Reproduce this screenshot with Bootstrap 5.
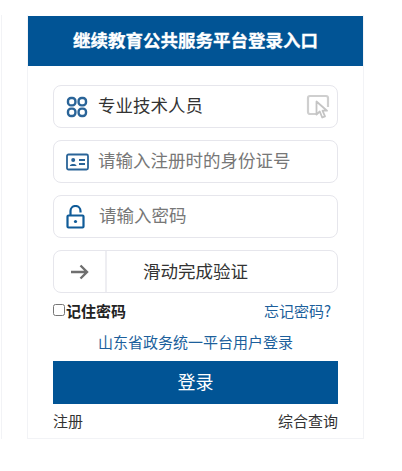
<!DOCTYPE html>
<html lang="zh-CN">
<head>
<meta charset="utf-8">
<title>登录</title>
<link href="https://cdn.jsdelivr.net/npm/bootstrap@5.3.0/dist/css/bootstrap.min.css" rel="stylesheet">
<style>
html,body{height:471px;overflow:hidden;background:#fff}
body{font-family:"Noto Sans CJK SC","Liberation Sans",sans-serif;color:#333;padding:15px 38px 0 1px}
.page-frame{border-left:1px solid #f2f3f6;height:424px;padding-left:25px}
.login-box{width:337px;height:424px;border:1px solid #f2f3f6;border-top:0;background:#fff;padding-top:1px}
.login-head{height:50px;width:335px;background:#015495;color:#fff;font-size:17.5px;font-weight:700;padding-bottom:2px;-webkit-text-stroke:.3px #fff}
.login-body{padding:19px 25px 0 25px;width:335px}
.field-row{height:43px;width:285px;border:1px solid #e6e6ec;border-radius:8px;margin-bottom:12px;padding-left:12px;font-size:17.5px;color:#333}
.field-row svg{flex:none}
.field-txt{margin-left:10px;line-height:1;padding-bottom:3px}
.id-txt{margin-left:9px}
.lock-txt{margin-left:14px}
.hint-txt{color:#777}
.pick-icon{margin-left:auto;margin-right:6px}
.slide-handle{width:53px;height:41px;border-right:2px solid #eeeef2;margin-left:-12px}
.slide-txt{margin-left:36px;color:#333;padding-bottom:1px}
.opt-row{height:38px;width:285px;margin-top:-1px;font-size:15px}
.opt-check{width:12px;height:12px;border:1.5px solid #767676;border-radius:2.5px;background:#fff;margin-right:1px;margin-bottom:3px}
.opt-label{font-weight:700;color:#222}
.blue-link{color:#1c5f9c;text-decoration:none}
.forgot-link{margin-right:7px}
.gov-link{width:285px;font-size:15px;height:22px;line-height:24px;margin-bottom:9px}
.login-btn{display:block;width:285px;height:43px;background:#015495;border:0;border-radius:0;color:#fff;font-size:18px;padding:0 0 3px}
.login-btn:hover{background:#015495;color:#fff}
.foot-row{width:285px;font-size:15px;margin-top:7px;line-height:20px}
.foot-row a{color:#333;text-decoration:none}
</style>
</head>
<body>
<div class="page-frame">
  <div class="login-box">
    <div class="login-head d-flex align-items-center justify-content-center">继续教育公共服务平台登录入口</div>
    <div class="login-body">
      <div class="field-row d-flex align-items-center">
        <svg width="22" height="22" viewBox="0 0 22 22" fill="none" stroke="#2a6498" stroke-width="2.4"><rect x="2" y="2" width="7.4" height="7.4" rx="3"/><rect x="12.6" y="2" width="7.4" height="7.4" rx="3"/><rect x="2" y="12.6" width="7.4" height="7.4" rx="3"/><rect x="12.6" y="12.6" width="7.4" height="7.4" rx="3"/></svg>
        <span class="field-txt">专业技术人员</span>
        <svg class="pick-icon" width="25" height="26" viewBox="0 0 25 26" fill="none"><path d="M10 20H4a2 2 0 0 1-2-2V4a2 2 0 0 1 2-2h16a2 2 0 0 1 2 2v9" stroke="#cfcfcf" stroke-width="2.2"/><path d="M10.500 7.500v13l3.300-3 2.400 6 2.800-1.200-2.500-5.600h4.500z" fill="#fff" stroke="#c4c4c4" stroke-width="1.800" stroke-linejoin="round"/></svg>
      </div>
      <div class="field-row d-flex align-items-center">
        <svg width="23" height="18" viewBox="0 0 23 18" fill="none"><rect x="1" y="1.500" width="21" height="15" rx="1.500" stroke="#2a6498" stroke-width="1.800"/><circle cx="7.200" cy="7" r="2" fill="#2a6498"/><path d="M3.800 13c.4-2.600 6.400-2.600 6.800 0z" fill="#2a6498"/><path d="M13 7h6M13 11h6" stroke="#2a6498" stroke-width="1.800"/></svg>
        <span class="field-txt hint-txt id-txt">请输入注册时的身份证号</span>
      </div>
      <div class="field-row d-flex align-items-center">
        <svg width="19" height="24" viewBox="0 0 19 24" fill="none"><path d="M4.500 10V6a5 5 0 0 1 10 0v1.500" stroke="#0f5b98" stroke-width="2.200"/><rect x="1.500" y="10.500" width="16" height="12" rx="1" stroke="#0f5b98" stroke-width="2.200"/><circle cx="9.500" cy="16.500" r="1.600" fill="#0f5b98"/></svg>
        <span class="field-txt hint-txt lock-txt">请输入密码</span>
      </div>
      <div class="field-row d-flex align-items-center mb-0">
        <div class="slide-handle d-flex align-items-center justify-content-center">
          <svg width="18" height="16" viewBox="0 0 18 16" fill="none" stroke="#6f6f6f" stroke-width="2.400"><path d="M0 8h16M9.500 1.500 16 8l-6.500 6.500"/></svg>
        </div>
        <span class="slide-txt">滑动完成验证</span>
      </div>
      <div class="opt-row d-flex align-items-center justify-content-between">
        <div class="d-flex align-items-center"><span class="opt-check"></span><span class="opt-label">记住密码</span></div>
        <a class="blue-link forgot-link" href="#">忘记密码?</a>
      </div>
      <div class="gov-link text-center"><a class="blue-link" href="#">山东省政务统一平台用户登录</a></div>
      <button type="button" class="btn login-btn">登录</button>
      <div class="foot-row d-flex justify-content-between"><a href="#">注册</a><a href="#">综合查询</a></div>
    </div>
  </div>
</div>
<script src="https://cdn.jsdelivr.net/npm/bootstrap@5.3.0/dist/js/bootstrap.bundle.min.js"></script>
</body>
</html>
